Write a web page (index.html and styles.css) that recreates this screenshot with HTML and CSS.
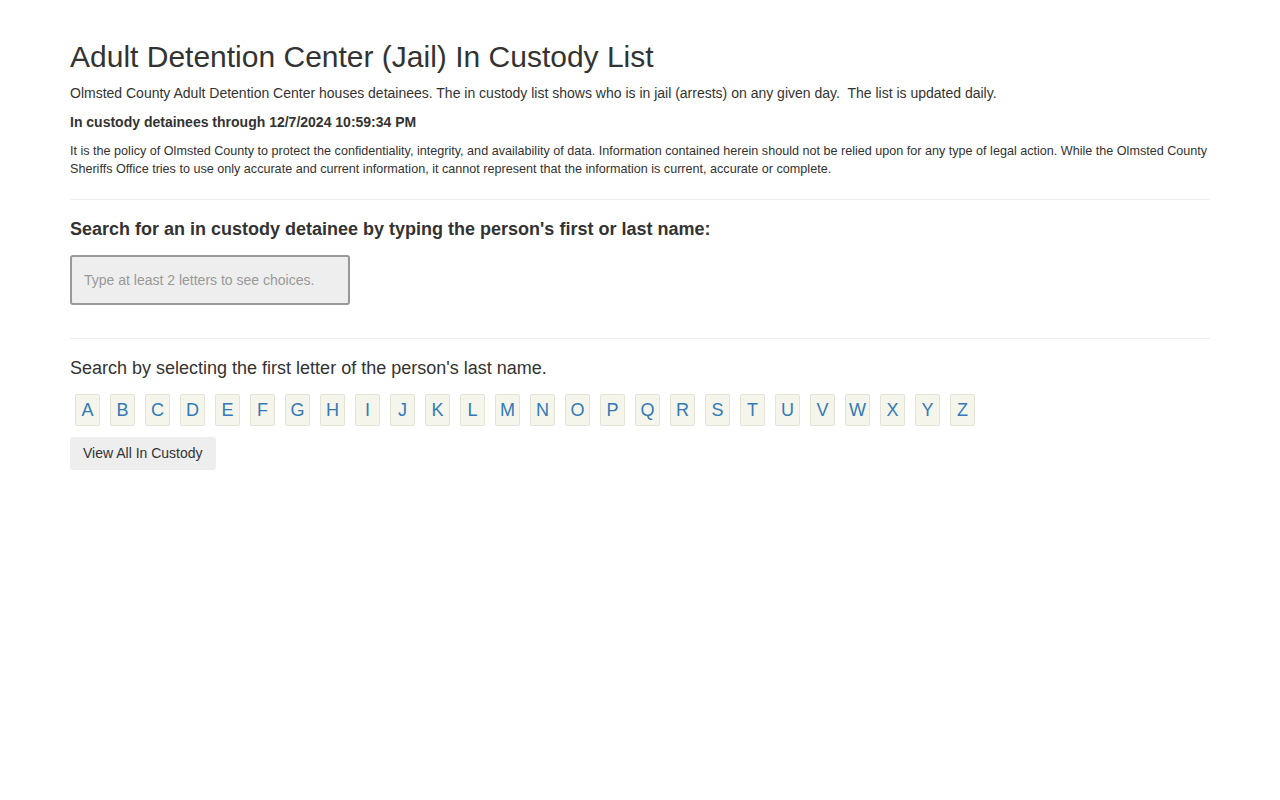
FILE: index.html
```html
<!DOCTYPE html>
<html lang="en">
<head>
    <meta charset="UTF-8">
    <meta name="viewport" content="width=device-width, initial-scale=1.0">
    <title>In Custody List</title>
    <link rel="stylesheet" href="styles.css">
</head>
<body>
    <div class="container">
        <h1>Adult Detention Center (Jail) In Custody List</h1>
        <p class="intro">Olmsted County Adult Detention Center houses detainees. The in custody list shows who is in jail (arrests) on any given day.&nbsp; The list is updated daily.</p>
        <p class="through">In custody detainees through 12/7/2024 10:59:34 PM</p>
        <p class="disclaimer">It is the policy of Olmsted County to protect the confidentiality, integrity, and availability of data. Information contained herein should not be relied upon for any type of legal action. While the Olmsted County Sheriffs Office tries to use only accurate and current information, it cannot represent that the information is current, accurate or complete.</p>

        <hr>

        <h3>Search for an in custody detainee by typing the person's first or last name:</h3>
        <input type="text" class="name-search" placeholder="Type at least 2 letters to see choices.">

        <hr>

        <h4>Search by selecting the first letter of the person's last name.</h4>
        <div class="letters">
            <a href="#">A</a><a href="#">B</a><a href="#">C</a><a href="#">D</a><a href="#">E</a><a href="#">F</a><a href="#">G</a><a href="#">H</a><a href="#">I</a><a href="#">J</a><a href="#">K</a><a href="#">L</a><a href="#">M</a><a href="#">N</a><a href="#">O</a><a href="#">P</a><a href="#">Q</a><a href="#">R</a><a href="#">S</a><a href="#">T</a><a href="#">U</a><a href="#">V</a><a href="#">W</a><a href="#">X</a><a href="#">Y</a><a href="#">Z</a>
        </div>
        <button class="view-all">View All In Custody</button>
    </div>
</body>
</html>
```

FILE: styles.css
```css
body {
    margin: 0;
    font-family: "Liberation Sans", Arial, sans-serif;
    font-size: 14px;
    line-height: 1.42857;
    color: #333;
    background: #fff;
}
.container {
    width: 1140px;
    margin: 0 auto;
    padding: 0 15px;
}
h1 {
    font-size: 30px;
    font-weight: normal;
    line-height: 1.1;
    margin: 40px 0 11px;
}
.intro { margin: 0 0 9px; }
.through {
    font-weight: bold;
    margin: 0 0 9px;
}
.disclaimer {
    font-size: 12.6px;
    line-height: 18px;
    margin: 0;
    padding-bottom: 1px;
}
hr {
    border: 0;
    border-top: 1px solid #eee;
    margin: 20px 0;
}
h3 {
    font-size: 18px;
    font-weight: bold;
    line-height: 1.1;
    margin: 0 0 15px;
}
.name-search {
    display: block;
    width: 280px;
    height: 50px;
    box-sizing: border-box;
    padding: 6px 12px;
    font-family: inherit;
    font-size: 14px;
    color: #555;
    background: #eee;
    border: 2px solid #999;
    border-radius: 3px;
    margin-bottom: 33px;
}
.name-search::placeholder { color: #999; }
h4 {
    font-size: 18px;
    font-weight: normal;
    line-height: 1.1;
    margin: 0 0 15px;
}
.letters {
    display: flex;
    gap: 10px;
    padding-left: 5px;
    margin-bottom: 11px;
}
.letters a {
    display: block;
    width: 25px;
    height: 32px;
    box-sizing: border-box;
    line-height: 30px;
    text-align: center;
    font-size: 18px;
    color: #337ab7;
    text-decoration: none;
    background: #f5f5ec;
    border: 1px solid #e3e3d6;
    border-radius: 2px;
}
.view-all {
    font-family: inherit;
    font-size: 14px;
    color: #333;
    background: #eee;
    border: 0;
    border-radius: 3px;
    padding: 0 13px;
    height: 33px;
    cursor: pointer;
}
```
